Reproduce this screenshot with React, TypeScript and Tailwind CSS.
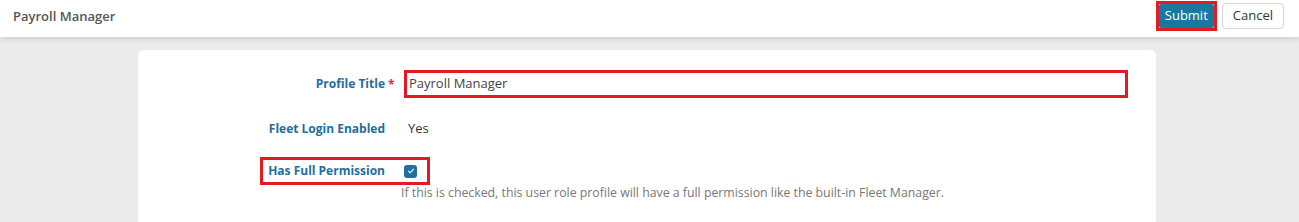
import React from "react";

const font = { fontFamily: '"Open Sans", "Liberation Sans", sans-serif' };

const Label: React.FC<{ text: string; required?: boolean }> = ({ text, required }) => (
  <div className="w-[247px] shrink-0 flex justify-end">
    <span className="relative text-[12px] font-bold text-[#1e6e9c]">
      {text}
      {required && (
        <span className="absolute left-[calc(100%+3px)] top-[1px] text-[#e0245e]">*</span>
      )}
    </span>
  </div>
);

export default function App() {
  return (
    <div className="w-[1299px] h-[222px] bg-[#ebebeb] overflow-hidden" style={font}>
      <header className="h-[37px] bg-white flex items-start justify-between pl-[13px] pr-[15px] shadow-[0_2px_6px_rgba(0,0,0,0.12)] relative z-10">
        <h1 className="mt-[7px] text-[13px] font-semibold text-[#555]">Payroll Manager</h1>
        <div className="flex items-start gap-[5px] pt-[1px]">
          <button className="h-[30px] px-[3px] flex items-center outline-[3px] outline-[#e21b23] outline-offset-[-3px]">
            <span className="h-[24px] px-[6px] flex items-center bg-[#1a78a0] text-white text-[13px] rounded-[2px]">
              Submit
            </span>
          </button>
          <button className="mt-[2px] h-[26px] px-[10px] border border-[#d4d4d4] rounded-[4px] bg-white text-[13px] text-[#333]">
            Cancel
          </button>
        </div>
      </header>

      <main className="pt-[13px] pl-[138px] w-[1156px]">
        <section className="bg-white rounded-t-[6px] h-[200px] pt-[20px] pr-[28px]">
          <div className="flex items-center h-[28px]">
            <Label text="Profile Title" required />
            <div className="ml-[19px] flex-1 h-[28px] border-[3px] border-[#e21b23] flex items-center pl-[2px] text-[13px] text-[#444]">
              Payroll Manager
            </div>
          </div>

          <div className="flex items-center h-[28px] mt-[17px]">
            <Label text="Fleet Login Enabled" />
            <span className="ml-[23px] text-[13px] text-[#333]">Yes</span>
          </div>

          <div className="relative flex items-center h-[28px] mt-[14px]">
            <span className="absolute left-[122px] top-0 w-[170px] h-[28px] border-[3px] border-[#e21b23]" />
            <Label text="Has Full Permission" />
            <span className="ml-[19px] w-[13px] h-[13px] rounded-[3px] bg-[#1f6fa0] flex items-center justify-center">
              <svg width="8" height="8" viewBox="0 0 8 8" fill="none">
                <path d="M1.5 4.2 L3.2 5.8 L6.5 2.2" stroke="white" strokeWidth="1.1" strokeLinecap="round" strokeLinejoin="round" />
              </svg>
            </span>
          </div>

          <p className="ml-[263px] -mt-[1px] text-[12.3px] text-[#777]">
            If this is checked, this user role profile will have a full permission like the built-in Fleet Manager.
          </p>
        </section>
      </main>
    </div>
  );
}
